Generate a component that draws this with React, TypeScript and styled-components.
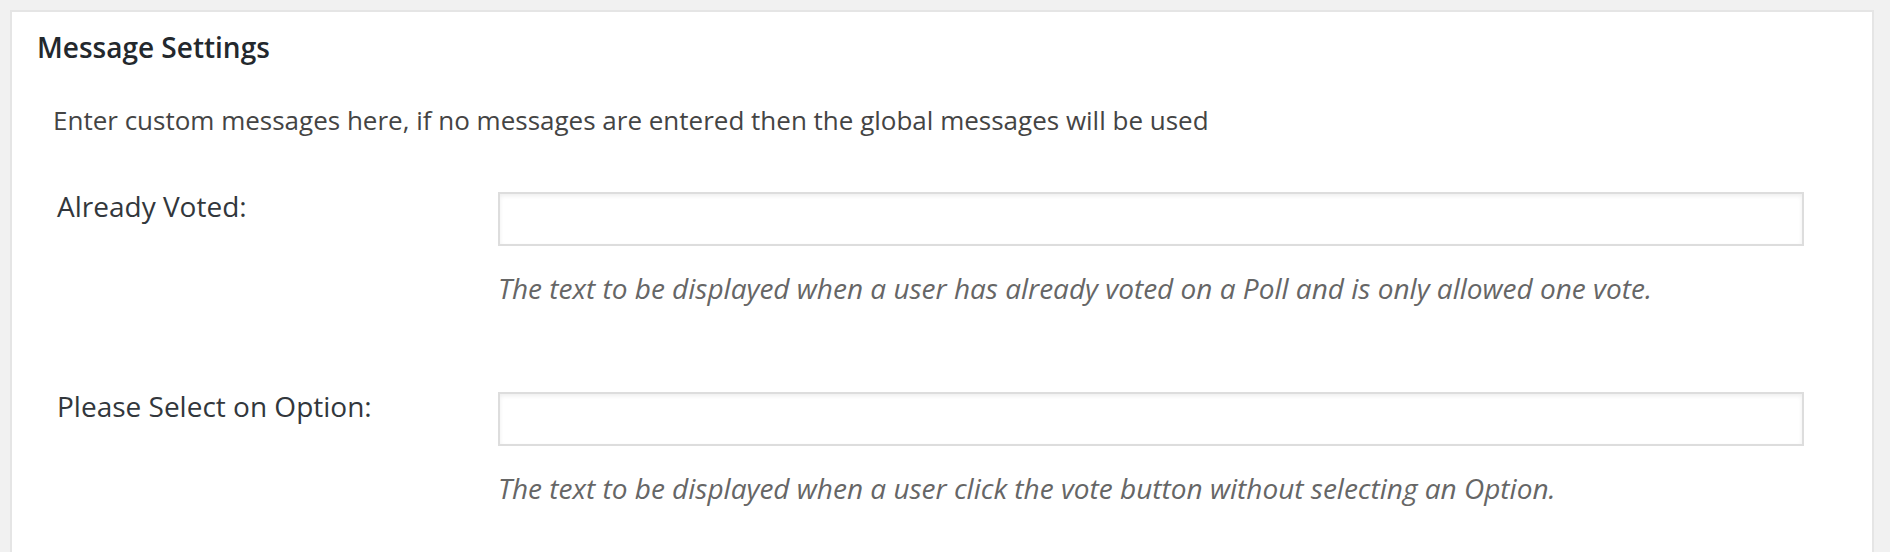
import React from "react";
import styled, { createGlobalStyle } from "styled-components";

const GlobalStyle = createGlobalStyle`
  html, body {
    margin: 0;
    padding: 0;
    background: #f1f1f1;
  }
  body {
    font-family: "Open Sans", "Liberation Sans", sans-serif;
  }
`;

const Page = styled.div`
  padding: 10px 16px 0 10px;
  height: 552px;
  box-sizing: border-box;
  overflow: hidden;
`;

const Panel = styled.div`
  background: #fff;
  border: 2px solid #e5e5e5;
  border-bottom: none;
  height: 100%;
  box-sizing: border-box;
  padding: 15px 25px 0 25px;
`;

const Title = styled.h2`
  margin: 0;
  font-size: 28px;
  line-height: 40px;
  font-weight: 600;
  color: #23282d;
`;

const Intro = styled.p`
  margin: 35px 0 0 16px;
  font-size: 26px;
  line-height: 36px;
  color: #444;
`;

const Fields = styled.div`
  display: flex;
  flex-direction: column;
  margin-top: 54px;
`;

const Row = styled.div`
  display: grid;
  grid-template-columns: 441px 1306px;
  height: 200px;
  padding-left: 20px;
`;

const Label = styled.label`
  font-size: 28px;
  line-height: 40px;
  margin-top: -6px;
  color: #32373c;
`;

const Field = styled.div`
  display: flex;
  flex-direction: column;
`;

const TextInput = styled.input`
  box-sizing: border-box;
  width: 1306px;
  height: 54px;
  margin: 0;
  border: 2px solid #ddd;
  border-radius: 0;
  background: #fff;
  box-shadow: inset 0 2px 4px rgba(0, 0, 0, 0.07);
  font-family: inherit;
  font-size: 28px;
  padding: 0 10px;
  outline: none;
`;

const Help = styled.p`
  margin: 22px 0 0 0;
  font-size: 28px;
  line-height: 40px;
  font-style: italic;
  color: #666;
`;

const fields = [
  {
    label: "Already Voted:",
    help: "The text to be displayed when a user has already voted on a Poll and is only allowed one vote.",
  },
  {
    label: "Please Select on Option:",
    help: "The text to be displayed when a user click the vote button without selecting an Option.",
  },
];

export default function App() {
  return (
    <>
      <GlobalStyle />
      <Page>
        <Panel>
          <Title>Message Settings</Title>
          <Intro>
            Enter custom messages here, if no messages are entered then the global messages will be used
          </Intro>
          <Fields>
            {fields.map((f) => (
              <Row key={f.label}>
                <Label>{f.label}</Label>
                <Field>
                  <TextInput type="text" />
                  <Help>{f.help}</Help>
                </Field>
              </Row>
            ))}
          </Fields>
        </Panel>
      </Page>
    </>
  );
}
